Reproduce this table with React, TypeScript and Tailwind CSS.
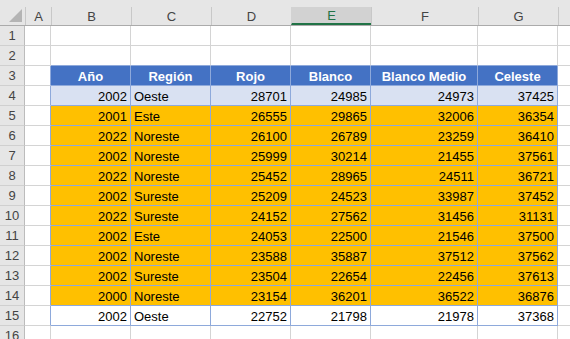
import React from "react"

const cols = [
  { key: "A", w: "w-[26px]" },
  { key: "B", w: "w-[80px]" },
  { key: "C", w: "w-[80px]" },
  { key: "D", w: "w-[80px]" },
  { key: "E", w: "w-[80px]" },
  { key: "F", w: "w-[107px]" },
  { key: "G", w: "w-[80px]" },
  { key: "H", w: "w-[80px]" },
]

const headers = ["Año", "Región", "Rojo", "Blanco", "Blanco Medio", "Celeste"]

const data: [number, string, number, number, number, number][] = [
  [2002, "Oeste", 28701, 24985, 24973, 37425],
  [2001, "Este", 26555, 29865, 32006, 36354],
  [2022, "Noreste", 26100, 26789, 23259, 36410],
  [2002, "Noreste", 25999, 30214, 21455, 37561],
  [2022, "Noreste", 25452, 28965, 24511, 36721],
  [2002, "Sureste", 25209, 24523, 33987, 37452],
  [2022, "Sureste", 24152, 27562, 31456, 31131],
  [2002, "Este", 24053, 22500, 21546, 37500],
  [2002, "Noreste", 23588, 35887, 37512, 37562],
  [2002, "Sureste", 23504, 22654, 22456, 37613],
  [2000, "Noreste", 23154, 36201, 36522, 36876],
  [2002, "Oeste", 22752, 21798, 21978, 37368],
]

function RowHead({ n }: { n: number }) {
  return (
    <div className="w-[25px] h-[20px] shrink-0 bg-[#e6e6e6] border-r border-b border-r-[#bcbcbc] border-b-[#d0d0d0] flex items-center justify-center text-[#444] box-border">
      {n}
    </div>
  )
}

function Blank({ w, blueR, blueB }: { w: string; blueR?: boolean; blueB?: boolean }) {
  return (
    <div
      className={`${w} h-[20px] shrink-0 border-r border-b box-border ${blueR ? "border-r-[#8ea9db]" : "border-r-[#d4d4d4]"} ${
        blueB ? "border-b-[#8ea9db]" : "border-b-[#d4d4d4]"
      }`}
    />
  )
}

export default function App() {
  return (
    <div
      className="w-[570px] h-[339px] overflow-hidden bg-white text-[13px] leading-none"
      style={{ fontFamily: '"Liberation Sans", Arial, sans-serif' }}
    >
      {/* Column headers */}
      <div className="flex h-[26px] bg-[#e6e6e6] border-b border-[#ababab] box-border">
        <div className="w-[25px] shrink-0 flex items-end justify-end pr-[3px] pb-[3px]">
          <svg width="13" height="13" viewBox="0 0 13 13">
            <polygon points="13,0 13,13 0,13" fill="#b4b4b4" />
          </svg>
        </div>
        {cols.map((c) => (
          <div key={c.key} className={`${c.w} shrink-0 pt-[7px] h-full box-border`}>
            <div
              className={`h-full flex items-center justify-center border-l box-border ${
                c.key === "E"
                  ? "bg-[#d2d2d2] border-[#d2d2d2] text-[#217346] border-b-2 border-b-[#217346]"
                  : "border-[#c8c8c8] text-[#444]"
              }`}
            >
              {c.key === "H" ? "" : c.key}
            </div>
          </div>
        ))}
      </div>

      {/* Row 1 & 2 */}
      {[1, 2].map((n) => (
        <div key={n} className="flex">
          <RowHead n={n} />
          {cols.map((c) => (
            <Blank key={c.key} w={c.w} blueB={n === 2 && c.key !== "A" && c.key !== "H"} />
          ))}
        </div>
      ))}

      {/* Row 3: table header */}
      <div className="flex">
        <RowHead n={3} />
        <Blank w="w-[26px]" blueR />
        {headers.map((h, i) => (
          <div
            key={h}
            className={`${cols[i + 1].w} h-[20px] shrink-0 bg-[#4472c4] text-white font-bold flex items-center justify-center border-r border-b border-r-[#8ea9db] border-b-[#8ea9db] box-border pt-[1px]`}
          >
            {h}
          </div>
        ))}
        <Blank w="w-[80px]" />
      </div>

      {/* Data rows */}
      {data.map((r, ri) => {
        const bg = ri === 0 ? "bg-[#d9e1f2]" : ri === data.length - 1 ? "bg-white" : "bg-[#ffc000]"
        return (
          <div key={ri} className="flex">
            <RowHead n={ri + 4} />
            <Blank w="w-[26px]" blueR />
            {r.map((v, ci) => (
              <div
                key={ci}
                className={`${cols[ci + 1].w} h-[20px] shrink-0 ${bg} text-black flex items-center pt-[2px] border-r border-b border-r-[#8ea9db] border-b-[#8ea9db] box-border ${
                  ci === 1 ? "justify-start pl-[3px]" : "justify-end pr-[3px]"
                }`}
              >
                {v}
              </div>
            ))}
            <Blank w="w-[80px]" />
          </div>
        )
      })}

      {/* Row 16 */}
      <div className="flex">
        <RowHead n={16} />
        {cols.map((c) => (
          <Blank key={c.key} w={c.w} />
        ))}
      </div>
    </div>
  )
}
